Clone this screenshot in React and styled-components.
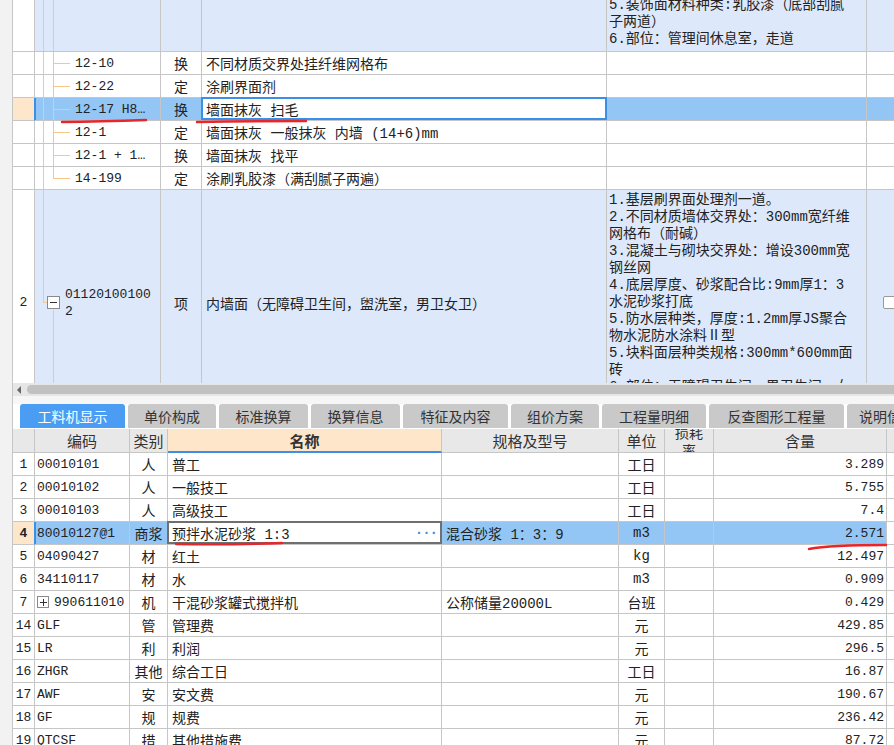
import React from "react";
import styled, { createGlobalStyle } from "styled-components";

const GRID = "#c6c6c6";
const TREE = "#f7c68a";
const PARENT_BG = "#dde9fb";
const SEL_BG = "#93c6f5";
const PEACH = "#fde6ca";
const FOCUS = "#3b8fe9";

const GlobalStyle = createGlobalStyle`
  html, body { margin: 0; padding: 0; background: #fff; }
  body {
    font-family: "Liberation Mono", "Noto Sans CJK SC", monospace;
    font-size: 14px;
    color: #222;
  }
`;

const line = (x, y, w, h) =>
  `linear-gradient(${TREE}, ${TREE}) ${x} ${y} / ${w} ${h} no-repeat`;

const guides = {
  none: [],
  top: [line("8px", "0", "1px", "100%"), line("18px", "0", "1px", "100%")],
  child: [
    line("8px", "0", "1px", "100%"),
    line("18px", "0", "1px", "100%"),
    line("18px", "50%", "17px", "1px"),
  ],
  last: [
    line("8px", "0", "1px", "100%"),
    line("18px", "0", "1px", "50%"),
    line("18px", "50%", "17px", "1px"),
  ],
  parent: [
    line("8px", "0", "1px", "50%"),
    line("8px", "50%", "4px", "1px"),
    line("18px", "100%", "1px", "calc(50% - 7px)"),
  ],
};

const Page = styled.div`
  position: relative;
  display: flex;
  width: 894px;
  height: 745px;
  overflow: hidden;
`;

const Gutter = styled.div`
  width: 12px;
  flex: none;
  background: #f2f2f2;
`;

const Main = styled.div`
  flex: 1;
  min-width: 0;
  display: flex;
  flex-direction: column;
  border-left: 1px solid ${GRID};
  overflow: hidden;
`;

const UpperViewport = styled.div`
  height: 383px;
  flex: none;
  overflow: hidden;
`;

const UpperTable = styled.div`
  margin-top: -5px;
`;

const UpperRow = styled.div`
  display: grid;
  grid-template-columns: 22px 126px 41px 405px 260px 100px;
  height: ${(p) => p.$h}px;
`;

const Cell = styled.div`
  position: relative;
  box-sizing: border-box;
  min-width: 0;
  border-right: 1px solid ${GRID};
  border-bottom: 1px solid ${GRID};
  background: ${(p) => p.$bg || "#fff"};
  display: flex;
  align-items: center;
  justify-content: ${(p) => p.$align || "flex-start"};
  padding: 0 ${(p) => (p.$pad === undefined ? 4 : p.$pad)}px;
  font-size: ${(p) => (p.$mono ? 13 : 14)}px;
  white-space: nowrap;
  overflow: ${(p) => (p.$focus ? "visible" : "hidden")};
  &::after {
    content: ${(p) => (p.$focus ? '""' : "none")};
    position: absolute;
    left: -1px;
    top: -1px;
    right: -1px;
    bottom: 0;
    border: 2px solid ${(p) => p.$focus};
    pointer-events: none;
  }
`;

const NumCell = styled(Cell)`
  justify-content: center;
  padding: 0;
  font-size: 13px;
  background: ${(p) => (p.$sel ? PEACH : p.$bg || "#fff")};
  border-right-color: ${(p) => (p.$sel ? FOCUS : GRID)};
  font-weight: ${(p) => (p.$sel ? 700 : 400)};
`;

const TreeCell = styled(Cell)`
  padding-left: ${(p) => p.$indent}px;
  font-size: 13px;
  background: ${(p) => [...guides[p.$kind], p.$bg].join(", ")};
  box-shadow: ${(p) => (p.$sel ? `inset 1px 0 0 ${FOCUS}` : "none")};
`;

const Feature = styled(Cell)`
  display: block;
  padding: 2px 2px 0;
  line-height: 17px;
`;

const TwoLines = styled.div`
  line-height: 17px;
`;

const ToggleBox = styled.span`
  position: relative;
  box-sizing: border-box;
  width: ${(p) => p.$size}px;
  height: ${(p) => p.$size}px;
  flex: none;
  margin-right: ${(p) => p.$gap}px;
  border: 1px solid #8a8a8a;
  background: #fff;
  display: flex;
  align-items: center;
  justify-content: center;
  &::before {
    content: "";
    width: 7px;
    height: 1px;
    background: #333;
  }
  &::after {
    content: ${(p) => (p.$plus ? '""' : "none")};
    position: absolute;
    width: 1px;
    height: 7px;
    background: #333;
  }
`;

const CheckBox = styled.span`
  box-sizing: border-box;
  width: 13px;
  height: 13px;
  margin-left: 16px;
  border: 1px solid #9a9a9a;
  border-radius: 2px;
  background: #fff;
  flex: none;
`;

const HScroll = styled.div`
  height: 13px;
  flex: none;
  display: flex;
  align-items: center;
  gap: 6px;
  padding: 0 0 0 4px;
  background: #e6e6e6;
`;

const Arrow = styled.span`
  width: 0;
  height: 0;
  border-top: 4px solid transparent;
  border-bottom: 4px solid transparent;
  border-right: 4px solid #666;
`;

const Thumb = styled.span`
  flex: 1;
  height: 9px;
  border-radius: 5px 0 0 5px;
  background: #c1c1c1;
`;

const Gap = styled.div`
  height: 8px;
  flex: none;
  background: #f6f6f6;
`;

const TabBar = styled.div`
  display: flex;
  gap: 3px;
  padding-left: 7px;
  height: 25px;
  flex: none;
  background: #fff;
`;

const Tab = styled.div`
  width: ${(p) => p.$w}px;
  height: 24px;
  flex: none;
  border-radius: 3px 3px 0 0;
  background: ${(p) => (p.$active ? "#4a9df3" : "#c9c9c9")};
  color: ${(p) => (p.$active ? "#fff" : "#333")};
  font-family: "Noto Sans CJK SC", sans-serif;
  font-size: 14px;
  display: flex;
  align-items: center;
  justify-content: center;
  white-space: nowrap;
  overflow: hidden;
`;

const LowerRow = styled.div`
  display: grid;
  grid-template-columns: 22px 95px 38px 274px 177px 46px 49px 173px 80px;
  height: ${(p) => p.$h || 23}px;
`;

const HeadCell = styled(Cell)`
  background: ${(p) => (p.$hot ? PEACH : "#e8e8e8")};
  font-family: "Noto Sans CJK SC", sans-serif;
  font-size: 15px;
  font-weight: ${(p) => (p.$hot ? 700 : 400)};
  color: #333;
  justify-content: center;
  border-bottom: ${(p) => (p.$hot ? `2px solid ${FOCUS}` : `1px solid ${GRID}`)};
`;

const Wrap = styled.div`
  font-size: 14px;
  line-height: 18px;
  text-align: center;
  white-space: normal;
  width: 30px;
  flex: none;
`;

const Dots = styled.span`
  margin-left: auto;
  color: ${FOCUS};
  font-weight: 700;
  letter-spacing: -1px;
`;

const Marks = styled.svg`
  position: absolute;
  left: 0;
  top: 0;
  pointer-events: none;
`;

const children = [
  { code: "12-10", type: "换", name: "不同材质交界处挂纤维网格布" },
  { code: "12-22", type: "定", name: "涂刷界面剂" },
  { code: "12-17 H8…", type: "换", name: "墙面抹灰 扫毛", sel: true },
  { code: "12-1", type: "定", name: "墙面抹灰 一般抹灰 内墙 (14+6)mm" },
  { code: "12-1 + 1…", type: "换", name: "墙面抹灰 找平" },
  { code: "14-199", type: "定", name: "涂刷乳胶漆（满刮腻子两遍）", last: true },
];

const topFeature = [
  "5.装饰面材料种类:乳胶漆（底部刮腻",
  "子两道）",
  "6.部位：管理间休息室，走道",
];

const rowTwoFeature = [
  "1.基层刷界面处理剂一道。",
  "2.不同材质墙体交界处：300mm宽纤维",
  "网格布（耐碱）",
  "3.混凝土与砌块交界处：增设300mm宽",
  "钢丝网",
  "4.底层厚度、砂浆配合比:9mm厚1：3",
  "水泥砂浆打底",
  "5.防水层种类，厚度:1.2mm厚JS聚合",
  "物水泥防水涂料Ⅱ型",
  "5.块料面层种类规格:300mm*600mm面",
  "砖",
  "6.部位：无障碍卫生间，男卫生间，女",
  "卫生间，盥洗室",
];

const tabs = [
  ["工料机显示", 105],
  ["单价构成", 88],
  ["标准换算", 89],
  ["换算信息", 89],
  ["特征及内容", 105],
  ["组价方案", 88],
  ["工程量明细", 104],
  ["反查图形工程量", 135],
  ["说明信息", 80],
];

const materials = [
  { no: "1", code: "00010101", type: "人", name: "普工", unit: "工日", qty: "3.289" },
  { no: "2", code: "00010102", type: "人", name: "一般技工", unit: "工日", qty: "5.755" },
  { no: "3", code: "00010103", type: "人", name: "高级技工", unit: "工日", qty: "7.4" },
  { no: "4", code: "80010127@1", type: "商浆", name: "预拌水泥砂浆 1:3", spec: "混合砂浆 1：3：9", unit: "m3", qty: "2.571", sel: true },
  { no: "5", code: "04090427", type: "材", name: "红土", unit: "kg", qty: "12.497" },
  { no: "6", code: "34110117", type: "材", name: "水", unit: "m3", qty: "0.909" },
  { no: "7", code: "990611010", type: "机", name: "干混砂浆罐式搅拌机", spec: "公称储量20000L", unit: "台班", qty: "0.429", plus: true },
  { no: "14", code: "GLF", type: "管", name: "管理费", unit: "元", qty: "429.85" },
  { no: "15", code: "LR", type: "利", name: "利润", unit: "元", qty: "296.5" },
  { no: "16", code: "ZHGR", type: "其他", name: "综合工日", unit: "工日", qty: "16.87" },
  { no: "17", code: "AWF", type: "安", name: "安文费", unit: "元", qty: "190.67" },
  { no: "18", code: "GF", type: "规", name: "规费", unit: "元", qty: "236.42" },
  { no: "19", code: "QTCSF", type: "措", name: "其他措施费", unit: "元", qty: "87.72" },
];

function UpperGrid() {
  return (
    <UpperViewport>
      <UpperTable>
        <UpperRow $h={57}>
          <NumCell />
          <TreeCell $kind="top" $indent={40} $bg={PARENT_BG} />
          <Cell $bg={PARENT_BG} />
          <Cell $bg={PARENT_BG} />
          <Feature $bg={PARENT_BG}>
            {topFeature.map((t) => (
              <div key={t}>{t}</div>
            ))}
          </Feature>
          <Cell $bg={PARENT_BG} />
        </UpperRow>

        {children.map((c) => {
          const bg = c.sel ? SEL_BG : "#fff";
          return (
            <UpperRow key={c.code} $h={23}>
              <NumCell $sel={c.sel} />
              <TreeCell
                $kind={c.last ? "last" : "child"}
                $indent={40}
                $bg={bg}
                $sel={c.sel}
              >
                {c.code}
              </TreeCell>
              <Cell $bg={bg} $align="center">
                {c.type}
              </Cell>
              <Cell $bg="#fff" $focus={c.sel ? FOCUS : undefined}>
                {c.name}
              </Cell>
              <Cell $bg={bg} />
              <Cell $bg={bg} />
            </UpperRow>
          );
        })}

        <UpperRow $h={226}>
          <NumCell>2</NumCell>
          <TreeCell $kind="parent" $indent={12} $bg={PARENT_BG}>
            <ToggleBox $size={13} $gap={5} />
            <TwoLines>
              <div>01120100100</div>
              <div>2</div>
            </TwoLines>
          </TreeCell>
          <Cell $bg={PARENT_BG} $align="center">
            项
          </Cell>
          <Cell $bg={PARENT_BG}>内墙面（无障碍卫生间，盥洗室，男卫女卫）</Cell>
          <Feature $bg={PARENT_BG}>
            {rowTwoFeature.map((t) => (
              <div key={t}>{t}</div>
            ))}
          </Feature>
          <Cell $bg={PARENT_BG} $pad={0}>
            <CheckBox />
          </Cell>
        </UpperRow>
      </UpperTable>
    </UpperViewport>
  );
}

function LowerGrid() {
  return (
    <div>
      <LowerRow $h={24}>
        <HeadCell />
        <HeadCell>编码</HeadCell>
        <HeadCell $pad={0}>类别</HeadCell>
        <HeadCell $hot>名称</HeadCell>
        <HeadCell>规格及型号</HeadCell>
        <HeadCell $pad={0}>单位</HeadCell>
        <HeadCell $pad={0}>
          <Wrap>损耗率</Wrap>
        </HeadCell>
        <HeadCell>含量</HeadCell>
        <HeadCell>说明</HeadCell>
      </LowerRow>
      {materials.map((m) => {
        const bg = m.sel ? SEL_BG : "#fff";
        return (
          <LowerRow key={m.no}>
            <NumCell $sel={m.sel}>{m.no}</NumCell>
            <TreeCell $kind="none" $indent={2} $bg={bg} $sel={m.sel}>
              {m.plus && <ToggleBox $size={12} $gap={5} $plus />}
              {m.code}
            </TreeCell>
            <Cell $bg={bg} $align="center" $pad={0}>
              {m.type}
            </Cell>
            <Cell $bg="#fff" $focus={m.sel ? "#6f6f6f" : undefined}>
              {m.name}
              {m.sel && <Dots>···</Dots>}
            </Cell>
            <Cell $bg={bg}>{m.spec}</Cell>
            <Cell $bg={bg} $align="center" $pad={0}>
              {m.unit}
            </Cell>
            <Cell $bg={bg} />
            <Cell $bg={bg} $align="flex-end" $pad={2} $mono>
              {m.qty}
            </Cell>
            <Cell $bg="#fff" />
          </LowerRow>
        );
      })}
    </div>
  );
}

export default function App() {
  return (
    <>
      <GlobalStyle />
      <Page>
        <Gutter />
        <Main>
          <UpperGrid />
          <HScroll>
            <Arrow />
            <Thumb />
          </HScroll>
          <Gap />
          <TabBar>
            {tabs.map(([label, w], i) => (
              <Tab key={label} $w={w} $active={i === 0}>
                {label}
              </Tab>
            ))}
          </TabBar>
          <LowerGrid />
        </Main>
        <Marks width="894" height="745" viewBox="0 0 894 745">
          <g fill="none" stroke="#e8262a" strokeWidth="2.4" strokeLinecap="round">
            <path d="M62 122 Q 100 121.5 146 120" />
            <path d="M197 122 Q 250 121 306 121" />
            <path d="M176 544 Q 230 545 282 543" />
            <path d="M809 549 Q 830 545 886 545" />
          </g>
        </Marks>
      </Page>
    </>
  );
}
